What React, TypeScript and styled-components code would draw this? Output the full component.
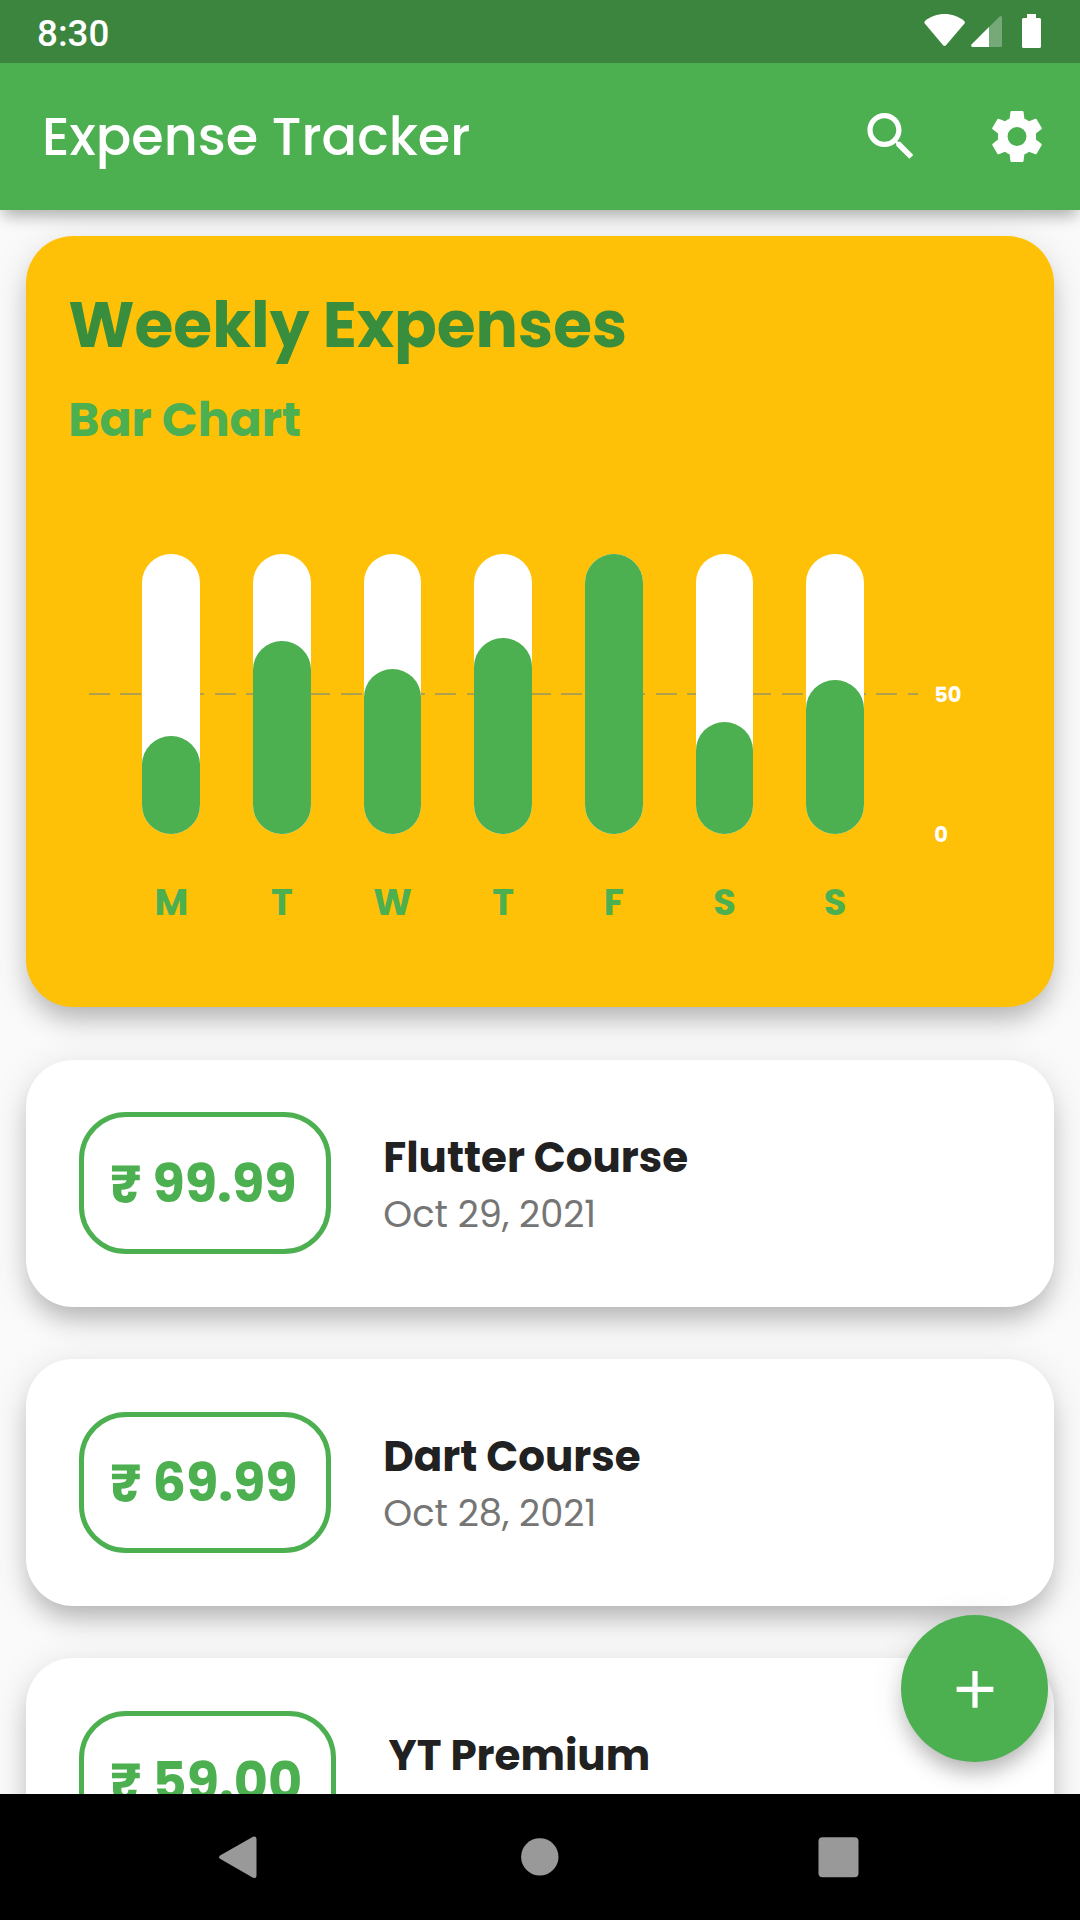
import React from "react";
import styled, { createGlobalStyle } from "styled-components";

const GREEN = "#4caf50";
const FONT = `Poppins, Inter, "Noto Sans", sans-serif`;

const GlobalStyle = createGlobalStyle`
  * { box-sizing: border-box; }
  html, body { margin: 0; padding: 0; background: #000; }
  body { font-family: ${FONT}; }
`;

const Screen = styled.div`
  width: 1080px;
  height: 1920px;
  display: flex;
  flex-direction: column;
  overflow: hidden;
  position: relative;
  background: #fafafa;
`;

const StatusBar = styled.div`
  flex: none;
  height: 63px;
  padding: 3px 38px 0 37px;
  display: flex;
  justify-content: space-between;
  align-items: flex-start;
  background: #3b853e;
  color: #fff;
  position: relative;
  z-index: 2;
`;

const Clock = styled.span`
  margin-top: 1px;
  font: 500 36.75px/60px Roboto, sans-serif;
`;

const StatusIcons = styled.svg`
  display: block;
  width: 120px;
  height: 38px;
  margin-top: 9px;
`;

const AppBar = styled.header`
  flex: none;
  height: 147px;
  padding: 0 32px 0 42px;
  display: flex;
  align-items: center;
  background: ${GREEN};
  color: #fff;
  position: relative;
  z-index: 1;
  box-shadow: 0 10px 14px -4px rgba(0, 0, 0, 0.25), 0 4px 20px 0 rgba(0, 0, 0, 0.08);
`;

const AppTitle = styled.h1`
  flex: 1;
  margin: 0;
  font-size: 52.5px;
  font-weight: 500;
  line-height: 80px;
`;

const IconButton = styled.button`
  width: 63px;
  height: 63px;
  margin-left: 63px;
  padding: 0;
  border: 0;
  background: none;
  color: inherit;
  svg { display: block; width: 63px; height: 63px; fill: currentColor; }
`;

const Body = styled.main`
  flex: 1;
  min-height: 0;
  padding: 26.25px 26.25px 0;
  display: flex;
  flex-direction: column;
  gap: 52.5px;
  overflow: hidden;
`;

const Card = styled.section`
  flex: none;
  border-radius: 47.25px;
  background: #fff;
  box-shadow: 0 16px 24px -4px rgba(0, 0, 0, 0.22), 0 6px 40px 0 rgba(0, 0, 0, 0.1);
`;

const ChartCard = styled(Card)`
  height: 771px;
  padding: 42px 42px 0;
  background: #ffc107;
`;

const ChartTitle = styled.h2`
  margin: 0;
  font-size: 63px;
  font-weight: 700;
  line-height: 94px;
  color: #388e3c;
`;

const ChartSubtitle = styled.h3`
  margin: 12.5px 0 0;
  font-size: 47.25px;
  font-weight: 700;
  line-height: 70px;
  color: ${GREEN};
`;

const Chart = styled.div`
  margin: 98.95px 0 0 21px;
  display: grid;
  grid-template-columns: 828.4px 1fr;
  column-gap: 16.5px;
  row-gap: 40.3px;
`;

const Plot = styled.div`
  height: 280px;
  padding-left: 53.2px;
  display: flex;
  gap: 52.9px;
  background: repeating-linear-gradient(90deg, #afa04e 0 21px, transparent 21px 31.5px) 0 139px / 100% 2px no-repeat;
`;

const Track = styled.div`
  width: 57.75px;
  display: flex;
  align-items: flex-end;
  border-radius: 28.9px;
  background: #fff;
`;

const Fill = styled.div`
  width: 100%;
  border-radius: 28.9px;
  background: ${GREEN};
`;

const Axis = styled.div`
  height: 295px;
  margin-bottom: -15px;
  padding-top: 127px;
  display: flex;
  flex-direction: column;
  justify-content: space-between;
  font-size: 21px;
  font-weight: 700;
  line-height: 28px;
  color: #fff;
`;

const Days = styled.div`
  padding-left: 53.2px;
  display: flex;
  gap: 52.9px;
`;

const Day = styled.span`
  width: 57.75px;
  text-align: center;
  font-size: 36.75px;
  font-weight: 700;
  line-height: 56px;
  color: ${GREEN};
`;

const Item = styled(Card)`
  height: 246.75px;
  padding: 52.5px;
  display: flex;
  align-items: center;
  gap: 52.5px;
`;

const Price = styled.div<{ $width: number }>`
  width: ${(p) => p.$width}px;
  height: 141.75px;
  padding: 1.3px 0 0 26.25px;
  display: flex;
  align-items: center;
  border: 5.25px solid ${GREEN};
  border-radius: 47.25px;
  font-size: 52.5px;
  font-weight: 700;
  line-height: 80px;
  white-space: nowrap;
  color: ${GREEN};
`;

const Details = styled.div`
  display: flex;
  flex-direction: column;
  padding-top: 4px;
`;

const Name = styled.span`
  font-size: 42px;
  font-weight: 700;
  line-height: 58px;
  color: #212121;
`;

const DateLine = styled.span`
  min-height: 55px;
  font-size: 36.75px;
  font-weight: 400;
  line-height: 55px;
  color: #757575;
`;

const Fab = styled.button`
  position: absolute;
  right: 32px;
  bottom: 158px;
  width: 147px;
  height: 147px;
  padding: 42px;
  border: 0;
  border-radius: 50%;
  background: ${GREEN};
  box-shadow: 0 14px 20px -4px rgba(0, 0, 0, 0.24), 0 4px 34px 0 rgba(0, 0, 0, 0.1);
  svg { display: block; width: 63px; height: 63px; fill: #fff; }
`;

const NavBar = styled.nav`
  flex: none;
  height: 126px;
  display: flex;
  align-items: center;
  justify-content: center;
  gap: 236px;
  background: #000;
  position: relative;
  z-index: 3;
  svg { display: block; width: 63px; height: 63px; fill: #999; }
`;

const week = [
  { day: "M", value: 35 },
  { day: "T", value: 69 },
  { day: "W", value: 59 },
  { day: "T", value: 70 },
  { day: "F", value: 100 },
  { day: "S", value: 40 },
  { day: "S", value: 55 },
];

const expenses = [
  { price: "₹ 99.99", name: "Flutter Course", date: "Oct 29, 2021", width: 252 },
  { price: "₹ 69.99", name: "Dart Course", date: "Oct 28, 2021", width: 252 },
  { price: "₹ 59.00", name: "YT Premium", date: "", width: 257.25 },
];

export default function App() {
  return (
    <Screen>
      <GlobalStyle />
      <StatusBar>
        <Clock>8:30</Clock>
        <StatusIcons viewBox="0 0 120 38" fill="#fff">
          <path d="M3 9C14-0.200 31-0.200 42.200 9Q43.400 10.200 42.500 11.500L24.200 33Q22.500 34.800 20.900 33L2.800 11.500Q1.800 10.200 3 9Z" />
          <path opacity=".3" d="M50.500 35Q48.300 34.500 49.800 32.300L77.600 4.600Q80 3 80 5.500V33.500Q80 35 78.500 35Z" />
          <path d="M50.500 35Q48.300 34.500 49.800 32.300L67 15V35Z" />
          <path d="M105 2h9v4h3.500q1.500 0 1.500 1.500V34.500q0 1.500-1.500 1.500h-16q-1.500 0-1.500-1.500V7.500q0-1.500 1.500-1.500H105z" />
        </StatusIcons>
      </StatusBar>
      <AppBar>
        <AppTitle>Expense Tracker</AppTitle>
        <IconButton aria-label="Search">
          <svg viewBox="-0.19 0 24 24">
            <path d="M15.500 14h-.79l-.28-.27C15.410 12.590 16 11.110 16 9.500 16 5.910 13.090 3 9.500 3S3 5.910 3 9.500 5.910 16 9.500 16c1.610 0 3.090-.59 4.230-1.570l.27.28v.79l5 4.990L20.490 19l-4.990-5zm-6 0C7.010 14 5 11.990 5 9.500S7.010 5 9.500 5 14 7.010 14 9.500 11.990 14 9.500 14z" />
          </svg>
        </IconButton>
        <IconButton aria-label="Settings">
          <svg viewBox="-0.19 0 24 24">
            <path
              fillRule="evenodd"
              d="M9.900 2.280H14.100Q14.450 2.280 14.500 2.630L14.820 5.230Q15.800 5.600 16.560 6.200L18.980 5.230Q19.300 5.100 19.480 5.400L21.380 8.700Q21.540 9 21.260 9.220L19.200 10.820Q19.320 12 19.200 13.180L21.260 14.780Q21.540 15 21.380 15.300L19.480 18.600Q19.300 18.900 18.980 18.770L16.560 17.800Q15.800 18.400 14.820 18.770L14.500 21.370Q14.450 21.720 14.100 21.720H9.900Q9.550 21.720 9.500 21.370L9.180 18.770Q8.200 18.400 7.440 17.800L5.020 18.770Q4.700 18.900 4.520 18.600L2.620 15.300Q2.460 15 2.740 14.780L4.800 13.180Q4.680 12 4.800 10.820L2.740 9.220Q2.460 9 2.620 8.700L4.520 5.400Q4.700 5.100 5.020 5.230L7.440 6.200Q8.200 5.600 9.180 5.230L9.500 2.630Q9.550 2.280 9.900 2.280ZM12 8.400A3.600 3.600 0 1 0 12 15.600A3.600 3.600 0 1 0 12 8.400Z"
            />
          </svg>
        </IconButton>
      </AppBar>
      <Body>
        <ChartCard>
          <ChartTitle>Weekly Expenses</ChartTitle>
          <ChartSubtitle>Bar Chart</ChartSubtitle>
          <Chart>
            <Plot>
              {week.map((d, i) => (
                <Track key={i}>
                  <Fill style={{ height: `${d.value}%` }} />
                </Track>
              ))}
            </Plot>
            <Axis>
              <span>50</span>
              <span>0</span>
            </Axis>
            <Days>
              {week.map((d, i) => (
                <Day key={i}>{d.day}</Day>
              ))}
            </Days>
          </Chart>
        </ChartCard>
        {expenses.map((e) => (
          <Item key={e.name}>
            <Price $width={e.width}>{e.price}</Price>
            <Details>
              <Name>{e.name}</Name>
              <DateLine>{e.date}</DateLine>
            </Details>
          </Item>
        ))}
      </Body>
      <Fab aria-label="Add expense">
        <svg viewBox="-0.19 -0.3 24 24">
          <path d="M19 13h-6v6h-2v-6H5v-2h6V5h2v6h6v2z" />
        </svg>
      </Fab>
      <NavBar>
        <svg viewBox="1 0 63 63">
          <path d="M11 29.500 44 10.800Q47.500 9.500 47.500 13V49.500Q47.500 53 44 51.700L11 32.800Q9.200 31.200 11 29.500Z" />
        </svg>
        <svg viewBox="0 0 63 63">
          <circle cx="30.800" cy="30.900" r="18.700" />
        </svg>
        <svg viewBox="0 0 63 63">
          <rect x="10.500" y="11.300" width="40" height="40" rx="4" />
        </svg>
      </NavBar>
    </Screen>
  );
}
